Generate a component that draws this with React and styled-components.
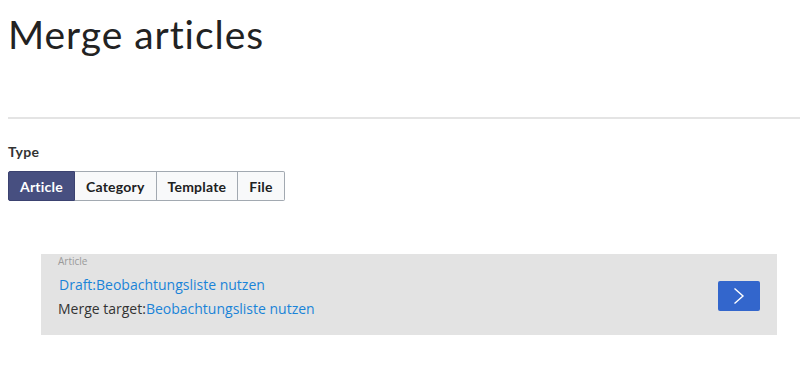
import React, { useState } from 'react';
import styled, { createGlobalStyle } from 'styled-components';

const GlobalStyle = createGlobalStyle`
  body {
    margin: 0;
    background: #fff;
    font-family: "Lato", "Open Sans", sans-serif;
    color: #202122;
  }
`;

const Page = styled.div`
  padding: 0 0 0 8px;
`;

const Title = styled.h1`
  margin: 0;
  padding-top: 11px;
  font-family: "Lato", sans-serif;
  font-weight: 400;
  font-size: 39px;
  line-height: 46px;
  color: #222;
  letter-spacing: 0.95px;
`;

const Divider = styled.hr`
  margin: 60px 0 0 0;
  border: 0;
  border-top: 2px solid #e4e4e4;
`;

const Label = styled.div`
  margin-top: 24px;
  font-size: 14px;
  font-weight: 700;
  line-height: 18px;
  letter-spacing: 0.3px;
  color: #333;
`;

const Group = styled.div`
  display: flex;
  margin-top: 10px;
`;

const TypeButton = styled.button`
  height: 30px;
  padding: 0 11px;
  font-family: "Lato", sans-serif;
  font-size: 14px;
  font-weight: 700;
  letter-spacing: 0.22px;
  color: ${p => (p.$active ? '#fff' : '#202122')};
  background: ${p => (p.$active ? '#474f80' : '#f8f9fa')};
  border: 1px solid ${p => (p.$active ? '#3b4270' : '#a2a9b1')};
  border-left-width: ${p => (p.$first ? '1px' : '0')};
  border-radius: ${p => (p.$first ? '2px 0 0 2px' : p.$last ? '0 2px 2px 0' : '0')};
  cursor: pointer;
`;

const Card = styled.div`
  display: flex;
  align-items: center;
  justify-content: space-between;
  margin: 53px 23px 0 41px;
  height: 81px;
  padding: 0 17px 0 17px;
  background: #e3e3e3;
  box-sizing: border-box;
`;

const Info = styled.div`
  display: flex;
  flex-direction: column;
  align-self: flex-start;
  padding-top: 1px;
`;

const Kind = styled.div`
  font-family: "Open Sans", sans-serif;
  font-size: 10px;
  line-height: 12px;
  color: #9a9a9a;
`;

const Line = styled.div`
  margin-top: ${p => p.$gap}px;
  padding-left: ${p => p.$indent || 0}px;
  font-family: "Open Sans", sans-serif;
  font-size: 14px;
  line-height: 19px;
  color: #333;
`;

const Link = styled.a`
  color: #1a83d8;
  text-decoration: none;
`;

const Next = styled.button`
  display: flex;
  align-items: center;
  justify-content: center;
  width: 42px;
  height: 30px;
  margin-top: 2px;
  padding: 0;
  border: 0;
  border-radius: 2px;
  background: #3366cc;
  cursor: pointer;
`;

const types = ['Article', 'Category', 'Template', 'File'];

export default function App() {
  const [type, setType] = useState('Article');
  return (
    <>
      <GlobalStyle />
      <Page>
        <Title>Merge articles</Title>
        <Divider />
        <Label>Type</Label>
        <Group>
          {types.map((t, i) => (
            <TypeButton
              key={t}
              $active={type === t}
              $first={i === 0}
              $last={i === types.length - 1}
              onClick={() => setType(t)}
            >
              {t}
            </TypeButton>
          ))}
        </Group>
      </Page>
      <Card>
        <Info>
          <Kind>Article</Kind>
          <Line $gap={8} $indent={1}>
            <Link href="#">Draft:Beobachtungsliste nutzen</Link>
          </Line>
          <Line $gap={5}>
            Merge target:<Link href="#">Beobachtungsliste nutzen</Link>
          </Line>
        </Info>
        <Next aria-label="Next">
          <svg width="12" height="18" viewBox="0 0 12 18" fill="none">
            <path d="M1.5 1.5L10 9l-8.5 7.5" stroke="#fff" strokeWidth="1.4" />
          </svg>
        </Next>
      </Card>
    </>
  );
}
